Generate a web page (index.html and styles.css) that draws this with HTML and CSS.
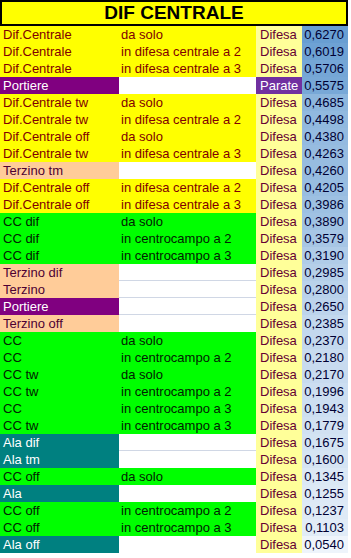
FILE: index.html
```html
<!DOCTYPE html>
<html lang="it">
<head>
<meta charset="utf-8">
<title>DIF CENTRALE</title>
<link rel="stylesheet" href="styles.css">
</head>
<body>
<div class="sheet">
  <div class="title">DIF CENTRALE</div>
  <div class="row y"><div class="a">Dif.Centrale</div><div class="b">da solo</div><div class="c">Difesa</div><div class="d" style="background:#689ed2">0,6270</div></div>
  <div class="row y"><div class="a">Dif.Centrale</div><div class="b">in difesa centrale a 2</div><div class="c">Difesa</div><div class="d" style="background:#6ea2d4">0,6019</div></div>
  <div class="row y"><div class="a">Dif.Centrale</div><div class="b">in difesa centrale a 3</div><div class="c">Difesa</div><div class="d" style="background:#75a6d6">0,5706</div></div>
  <div class="row p"><div class="a">Portiere</div><div class="b"></div><div class="c parate">Parate</div><div class="d" style="background:#78a8d7">0,5575</div></div>
  <div class="row y"><div class="a">Dif.Centrale tw</div><div class="b">da solo</div><div class="c">Difesa</div><div class="d" style="background:#8db6dd">0,4685</div></div>
  <div class="row y"><div class="a">Dif.Centrale tw</div><div class="b">in difesa centrale a 2</div><div class="c">Difesa</div><div class="d" style="background:#91b9df">0,4498</div></div>
  <div class="row y"><div class="a">Dif.Centrale off</div><div class="b">da solo</div><div class="c">Difesa</div><div class="d" style="background:#94bae0">0,4380</div></div>
  <div class="row y"><div class="a">Dif.Centrale tw</div><div class="b">in difesa centrale a 3</div><div class="c">Difesa</div><div class="d" style="background:#97bce0">0,4263</div></div>
  <div class="row t"><div class="a">Terzino tm</div><div class="b"></div><div class="c">Difesa</div><div class="d" style="background:#97bce0">0,4260</div></div>
  <div class="row y"><div class="a">Dif.Centrale off</div><div class="b">in difesa centrale a 2</div><div class="c">Difesa</div><div class="d" style="background:#98bde1">0,4205</div></div>
  <div class="row y"><div class="a">Dif.Centrale off</div><div class="b">in difesa centrale a 3</div><div class="c">Difesa</div><div class="d" style="background:#9dc0e2">0,3986</div></div>
  <div class="row g"><div class="a">CC dif</div><div class="b">da solo</div><div class="c">Difesa</div><div class="d" style="background:#a0c2e3">0,3890</div></div>
  <div class="row g"><div class="a">CC dif</div><div class="b">in centrocampo a 2</div><div class="c">Difesa</div><div class="d" style="background:#a7c6e5">0,3579</div></div>
  <div class="row g"><div class="a">CC dif</div><div class="b">in centrocampo a 3</div><div class="c">Difesa</div><div class="d" style="background:#b0cce8">0,3190</div></div>
  <div class="row t line"><div class="a">Terzino dif</div><div class="b"></div><div class="c">Difesa</div><div class="d" style="background:#b5cfe9">0,2985</div></div>
  <div class="row t line"><div class="a">Terzino</div><div class="b"></div><div class="c">Difesa</div><div class="d" style="background:#b9d2eb">0,2800</div></div>
  <div class="row p line"><div class="a">Portiere</div><div class="b"></div><div class="c">Difesa</div><div class="d" style="background:#bdd4ec">0,2650</div></div>
  <div class="row t"><div class="a">Terzino off</div><div class="b"></div><div class="c">Difesa</div><div class="d" style="background:#c3d8ee">0,2385</div></div>
  <div class="row g"><div class="a">CC</div><div class="b">da solo</div><div class="c">Difesa</div><div class="d" style="background:#c3d8ee">0,2370</div></div>
  <div class="row g"><div class="a">CC</div><div class="b">in centrocampo a 2</div><div class="c">Difesa</div><div class="d" style="background:#c8dbef">0,2180</div></div>
  <div class="row g"><div class="a">CC tw</div><div class="b">da solo</div><div class="c">Difesa</div><div class="d" style="background:#c8dbef">0,2170</div></div>
  <div class="row g"><div class="a">CC tw</div><div class="b">in centrocampo a 2</div><div class="c">Difesa</div><div class="d" style="background:#ccdef1">0,1996</div></div>
  <div class="row g"><div class="a">CC</div><div class="b">in centrocampo a 3</div><div class="c">Difesa</div><div class="d" style="background:#cddff1">0,1943</div></div>
  <div class="row g"><div class="a">CC tw</div><div class="b">in centrocampo a 3</div><div class="c">Difesa</div><div class="d" style="background:#d1e1f2">0,1779</div></div>
  <div class="row a-row line"><div class="a">Ala dif</div><div class="b"></div><div class="c">Difesa</div><div class="d" style="background:#d3e3f3">0,1675</div></div>
  <div class="row a-row"><div class="a">Ala tm</div><div class="b"></div><div class="c">Difesa</div><div class="d" style="background:#d5e4f3">0,1600</div></div>
  <div class="row g"><div class="a">CC off</div><div class="b">da solo</div><div class="c">Difesa</div><div class="d" style="background:#dbe8f5">0,1345</div></div>
  <div class="row a-row"><div class="a">Ala</div><div class="b"></div><div class="c">Difesa</div><div class="d" style="background:#dde9f6">0,1255</div></div>
  <div class="row g"><div class="a">CC off</div><div class="b">in centrocampo a 2</div><div class="c">Difesa</div><div class="d" style="background:#deeaf6">0,1237</div></div>
  <div class="row g"><div class="a">CC off</div><div class="b">in centrocampo a 3</div><div class="c">Difesa</div><div class="d" style="background:#e1ecf7">0,1103</div></div>
  <div class="row a-row"><div class="a">Ala off</div><div class="b"></div><div class="c">Difesa</div><div class="d" style="background:#eef4fb">0,0540</div></div>
</div>
</body>
</html>
```

FILE: styles.css
```css
html, body {
  margin: 0;
  padding: 0;
  background: #ffffff;
}

.sheet {
  width: 348px;
  display: flex;
  flex-direction: column;
  font-family: "Liberation Sans", Arial, sans-serif;
  font-size: 13px;
}

.title {
  height: 26px;
  box-sizing: border-box;
  border: 2px solid #000000;
  background: #ffff00;
  color: #000000;
  font-weight: bold;
  font-size: 19px;
  line-height: 22px;
  text-align: center;
}

.row {
  display: grid;
  grid-template-columns: 119px 137px 46px 46px;
  height: 17px;
}

.row > div {
  box-sizing: border-box;
  height: 17px;
  padding-top: 1px;
  line-height: 16px;
  white-space: nowrap;
  overflow: hidden;
}

.a {
  padding-left: 3px;
}

.b {
  padding-left: 2px;
  background: #ffffff;
}

.c {
  padding-left: 4px;
  background: #ffff99;
  color: #660033;
}

.c.parate {
  background: #7030a0;
  color: #ffffff;
}

.d {
  text-align: right;
  padding-right: 4px;
  color: #000033;
}

/* yellow: central defenders */
.y .a, .y .b {
  background: #ffff00;
  color: #800000;
}

/* green: midfield */
.g .a, .g .b {
  background: #00ff00;
  color: #002200;
}

/* purple: goalkeeper */
.p .a {
  background: #800080;
  color: #ffffff;
}

/* peach: full-back */
.t .a {
  background: #ffcc99;
  color: #4d0033;
}

/* teal: wing */
.a-row .a {
  background: #008080;
  color: #ffffff;
}

.line .b {
  border-bottom: 1px solid #d0d7e5;
}
```
